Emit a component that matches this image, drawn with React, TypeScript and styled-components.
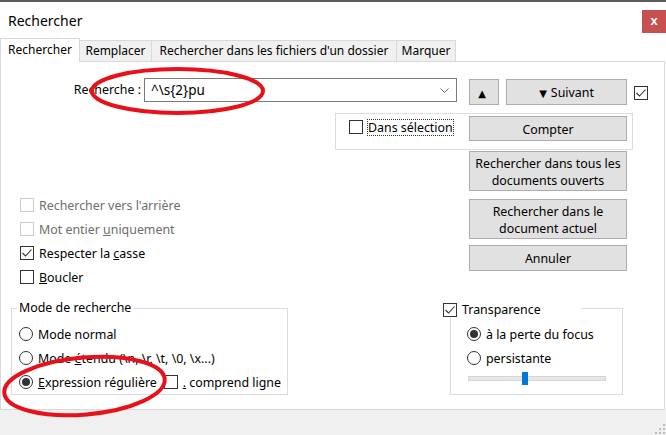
import React from 'react';
import styled, { createGlobalStyle } from 'styled-components';

const GlobalStyle = createGlobalStyle`
  html, body {
    margin: 0;
    padding: 0;
    background: #fff;
  }
  body {
    font-family: "Noto Sans", "DejaVu Sans", sans-serif;
    font-size: 12.4px;
    color: #000;
  }
`;

const Window = styled.div`
  position: relative;
  width: 666px;
  height: 435px;
  box-sizing: border-box;
  border-top: 2px solid #5b5b5b;
  background: #fff;
  display: flex;
  flex-direction: column;
  overflow: hidden;
`;

const TitleBar = styled.div`
  flex: none;
  height: 36px;
  display: flex;
  justify-content: space-between;
  align-items: flex-start;
`;

const Title = styled.div`
  margin: 9px 0 0 8px;
  font-size: 14px;
  line-height: 20px;
`;

const CloseButton = styled.div`
  margin-top: 8px;
  width: 24px;
  height: 23px;
  background: #c75050;
  color: #fff;
  font: bold 13px/22px "Liberation Sans", sans-serif;
  text-align: center;
`;

const TabBar = styled.div`
  flex: none;
  height: 23px;
  display: flex;
  align-items: flex-start;
  position: relative;
  z-index: 1;
`;

const Tab = styled.div<{ $active?: boolean; $width: number }>`
  box-sizing: border-box;
  width: ${(p) => p.$width}px;
  height: ${(p) => (p.$active ? 24 : 21)}px;
  margin-top: ${(p) => (p.$active ? 0 : 2)}px;
  margin-left: -1px;
  border: 1px solid #d9d9d9;
  border-bottom: none;
  background: ${(p) => (p.$active ? '#fff' : '#f0f0f0')};
  text-align: center;
  line-height: ${(p) => (p.$active ? 22 : 20)}px;
  white-space: nowrap;
  font-size: 12px;

  &:first-child {
    margin-left: 0;
  }
`;

const Panel = styled.div`
  flex: none;
  box-sizing: border-box;
  width: 665px;
  height: 349px;
  border: 1px solid #d9d9d9;
  background: #fff;
`;

const Footer = styled.div`
  flex: 1;
  background: #f0f0f0;
  display: flex;
  justify-content: flex-end;
  align-items: flex-end;
`;

const SearchRow = styled.div`
  display: flex;
  align-items: flex-start;
  margin-top: 16px;
  height: 27px;
`;

const FieldLabel = styled.label`
  width: 140px;
  margin-right: 3px;
  text-align: right;
  line-height: 24px;
`;

const Combo = styled.div`
  box-sizing: border-box;
  width: 313px;
  height: 24px;
  border: 1px solid #7a7a7a;
  display: flex;
  align-items: center;
  padding: 0 7px 0 6px;
  font-size: 13.5px;
`;

const ComboText = styled.span`
  flex: 1;
`;

const Button = styled.button<{ $width: number; $height: number; $mt?: number; $ml?: number }>`
  box-sizing: border-box;
  width: ${(p) => p.$width}px;
  height: ${(p) => p.$height}px;
  margin: ${(p) => p.$mt ?? 0}px 0 0 ${(p) => p.$ml ?? 0}px;
  padding: 1px 4px 0;
  background: #e1e1e1;
  border: 1px solid #adadad;
  border-radius: 0;
  font: inherit;
  line-height: 17px;
  color: #000;
  flex: none;
`;

const Arrow = styled.span`
  font-size: 10px;
  margin-right: 4px;
`;

const Box = styled.span<{ $disabled?: boolean; $mt?: number; $ml?: number }>`
  box-sizing: border-box;
  flex: none;
  width: 14px;
  height: 14px;
  margin: ${(p) => p.$mt ?? 0}px 0 0 ${(p) => p.$ml ?? 0}px;
  border: 1px solid ${(p) => (p.$disabled ? '#cccccc' : '#333333')};
  background: #fff;
  display: flex;
  align-items: center;
  justify-content: center;
`;

const Round = styled.span<{ $on?: boolean }>`
  box-sizing: border-box;
  flex: none;
  width: 14px;
  height: 14px;
  border-radius: 50%;
  border: 1px solid #333;
  background: #fff;
  display: flex;
  align-items: center;
  justify-content: center;

  &::after {
    content: '';
    display: ${(p) => (p.$on ? 'block' : 'none')};
    width: 8px;
    height: 8px;
    border-radius: 50%;
    background: #333;
  }
`;

const OptionRow = styled.div<{ $disabled?: boolean }>`
  display: flex;
  align-items: center;
  gap: 5px;
  height: 24px;
  white-space: nowrap;
  color: ${(p) => (p.$disabled ? '#6d6d6d' : '#000')};
`;

const TopArea = styled.div`
  display: flex;
  align-items: flex-start;
  height: 184px;
`;

const LeftCol = styled.div`
  box-sizing: border-box;
  flex: none;
  width: 287px;
  margin-top: 88px;
  padding-left: 19px;
`;

const RightCol = styled.div`
  flex: none;
  width: 298px;
  margin: 8px 0 0 47px;
  display: flex;
  flex-direction: column;
`;

const SelectionGroup = styled.div`
  box-sizing: border-box;
  height: 37px;
  border: 1px solid #dcdcdc;
  display: flex;
  align-items: flex-start;
  padding: 2px 5px 0 13px;
`;

const FocusLabel = styled.span`
  margin: 3px 0 0 4px;
  padding: 0;
  border: 1px dotted #333;
  line-height: 15px;
`;

const ButtonStack = styled.div`
  display: flex;
  flex-direction: column;
  margin-left: 134px;
`;

const BottomArea = styled.div`
  display: flex;
  align-items: flex-start;
  margin-top: 19px;
`;

const GroupBox = styled.div<{ $width: number; $ml: number; $pl: number }>`
  position: relative;
  box-sizing: border-box;
  width: ${(p) => p.$width}px;
  height: 87px;
  margin-left: ${(p) => p.$ml}px;
  padding: 13px 0 0 ${(p) => p.$pl}px;
  border: 1px solid #dcdcdc;
`;

const Legend = styled.div<{ $left: number; $top: number; $width?: number }>`
  position: absolute;
  left: ${(p) => p.$left}px;
  top: ${(p) => p.$top}px;
  ${(p) => (p.$width ? `width: ${p.$width}px;` : '')}
  height: 16px;
  padding: 0 2px;
  background: #fff;
  display: flex;
  align-items: center;
  gap: 5px;
  line-height: 16px;
  white-space: nowrap;
`;

const Track = styled.div`
  position: relative;
  box-sizing: border-box;
  width: 138px;
  height: 5px;
  margin: 6px 0 0 1px;
  background: #e7e7e7;
  border: 1px solid #d6d6d6;
`;

const Thumb = styled.div<{ $pos: number }>`
  position: absolute;
  left: ${(p) => p.$pos}px;
  top: -5px;
  width: 6px;
  height: 13px;
  background: #0078d7;
`;

const Annotations = styled.svg`
  position: absolute;
  left: 0;
  top: 0;
  width: 666px;
  height: 435px;
  pointer-events: none;
  z-index: 5;
`;

const Check = () => (
  <svg width="12" height="12" viewBox="0 0 12 12">
    <polyline points="1.5,6 4.5,9 10.5,2.5" fill="none" stroke="#333" strokeWidth="1.1" />
  </svg>
);

const tabs = [
  { label: 'Rechercher', width: 80, active: true },
  { label: 'Remplacer', width: 73 },
  { label: "Rechercher dans les fichiers d'un dossier", width: 246 },
  { label: 'Marquer', width: 60 },
];

export default function App() {
  return (
    <>
      <GlobalStyle />
      <Window>
        <TitleBar>
          <Title>Rechercher</Title>
          <CloseButton>x</CloseButton>
        </TitleBar>

        <TabBar>
          {tabs.map((t) => (
            <Tab key={t.label} $active={t.active} $width={t.width}>
              {t.label}
            </Tab>
          ))}
        </TabBar>

        <Panel>
          <SearchRow>
            <FieldLabel>Recherche :</FieldLabel>
            <Combo>
              <ComboText>^\s{'{'}2{'}'}pu</ComboText>
              <svg width="9" height="5" viewBox="0 0 9 5">
                <polyline points="0.5,0.5 4.5,4.5 8.5,0.5" fill="none" stroke="#6b6b6b" strokeWidth="1" />
              </svg>
            </Combo>
            <Button $width={30} $height={26} $mt={1} $ml={12}>
              <Arrow>▲</Arrow>
            </Button>
            <Button $width={121} $height={26} $mt={1} $ml={7}>
              <Arrow>▼</Arrow>Suivant
            </Button>
            <Box $mt={8} $ml={7}>
              <Check />
            </Box>
          </SearchRow>

          <TopArea>
            <LeftCol>
              <OptionRow $disabled>
                <Box $disabled />
                Rechercher vers l'arrière
              </OptionRow>
              <OptionRow $disabled>
                <Box $disabled />
                <span>
                  Mot entier <u>u</u>niquement
                </span>
              </OptionRow>
              <OptionRow>
                <Box>
                  <Check />
                </Box>
                <span>
                  Respecter la <u>c</u>asse
                </span>
              </OptionRow>
              <OptionRow>
                <Box />
                <span>
                  <u>B</u>oucler
                </span>
              </OptionRow>
            </LeftCol>

            <RightCol>
              <SelectionGroup>
                <Box $mt={4} />
                <FocusLabel>Dans sélection</FocusLabel>
                <Button $width={158} $height={25} style={{ marginLeft: 'auto' }}>
                  Compter
                </Button>
              </SelectionGroup>
              <ButtonStack>
                <Button $width={158} $height={40} $mt={1}>
                  Rechercher dans tous les documents ouverts
                </Button>
                <Button $width={158} $height={40} $mt={8}>
                  Rechercher dans le document actuel
                </Button>
                <Button $width={158} $height={26} $mt={6}>
                  Annuler
                </Button>
              </ButtonStack>
            </RightCol>
          </TopArea>

          <BottomArea>
            <GroupBox $width={277} $ml={10} $pl={7}>
              <Legend $left={5} $top={-9}>
                Mode de recherche
              </Legend>
              <OptionRow>
                <Round />
                Mode normal
              </OptionRow>
              <OptionRow>
                <Round />
                <span>
                  Mode <u>é</u>tendu (\n, \r, \t, \0, \x...)
                </span>
              </OptionRow>
              <OptionRow>
                <Round $on />
                <span>
                  <u>E</u>xpression régulière
                </span>
                <Box $ml={2} />
                <span>
                  <u>.</u> comprend ligne
                </span>
              </OptionRow>
            </GroupBox>

            <GroupBox $width={173} $ml={162} $pl={16}>
              <Legend $left={-10} $top={-7} $width={136}>
                <Box>
                  <Check />
                </Box>
                Transparence
              </Legend>
              <OptionRow>
                <Round $on />
                à la perte du focus
              </OptionRow>
              <OptionRow>
                <Round />
                persistante
              </OptionRow>
              <Track>
                <Thumb $pos={53} />
              </Track>
            </GroupBox>
          </BottomArea>
        </Panel>

        <Footer>
          <svg width="12" height="12" viewBox="0 0 12 12">
            {[
              [9, 1],
              [9, 5],
              [5, 5],
              [9, 9],
              [5, 9],
              [1, 9],
            ].map(([x, y]) => (
              <rect key={`${x}-${y}`} x={x} y={y} width="2" height="2" fill="#bcbcbc" />
            ))}
          </svg>
        </Footer>

        <Annotations viewBox="0 0 666 435">
          <ellipse cx="177.5" cy="89" rx="85.5" ry="22" fill="none" stroke="#e8101a" strokeWidth="4" />
          <ellipse
            cx="84.5"
            cy="384"
            rx="80.5"
            ry="28.5"
            fill="none"
            stroke="#e8101a"
            strokeWidth="4"
            transform="rotate(-5 84.5 384)"
          />
        </Annotations>
      </Window>
    </>
  );
}
